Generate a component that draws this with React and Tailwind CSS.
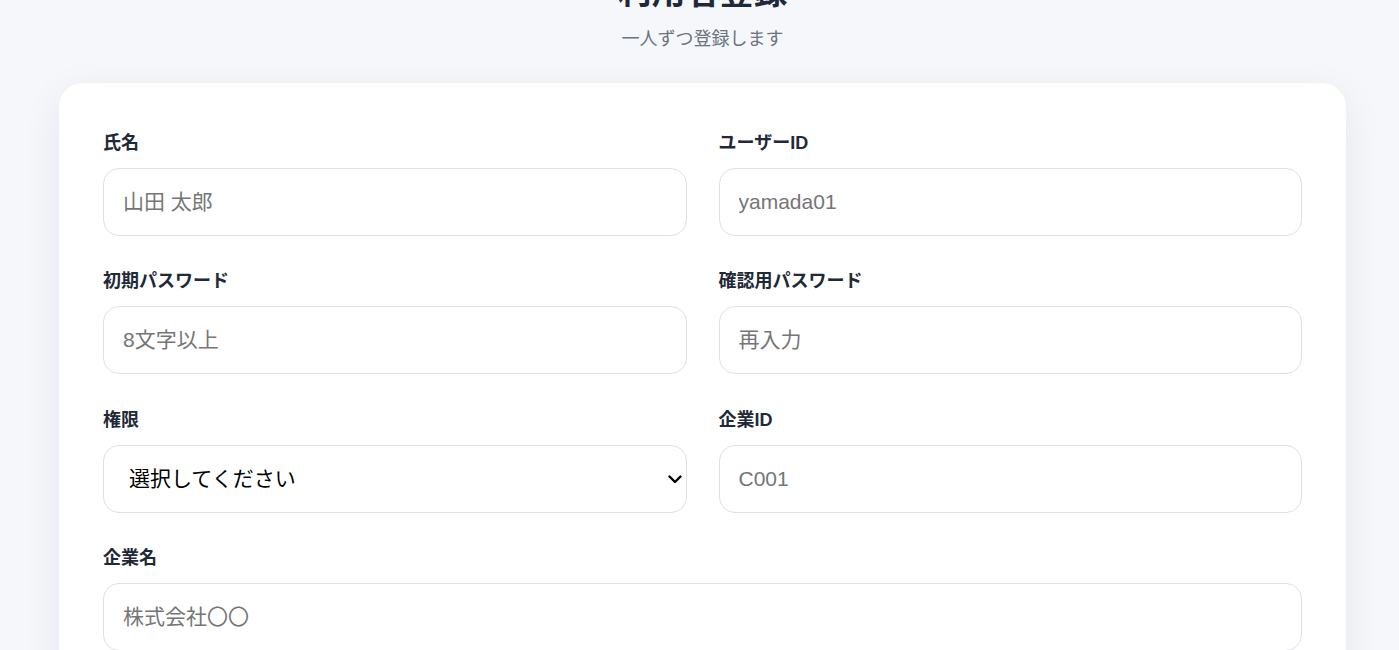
import React, { useState } from "react";

const fields = [
  { id: "name", label: "氏名", placeholder: "山田 太郎" },
  { id: "userId", label: "ユーザーID", placeholder: "yamada01" },
  { id: "password", label: "初期パスワード", placeholder: "8文字以上", type: "password" },
  { id: "confirm", label: "確認用パスワード", placeholder: "再入力", type: "password" },
];

const inputClass =
  "w-full h-[68px] rounded-2xl border border-[#dbe1ea] bg-white px-[19px] text-[21px] text-[#1f2937] outline-none placeholder:text-[#757575] focus:border-[#93a4c0]";

const Field = ({ label, children, wide }) => (
  <div className={wide ? "col-span-2" : ""}>
    <label className="block text-[18px] leading-7 font-bold text-[#1f2937] mb-[11px]">{label}</label>
    {children}
  </div>
);

const App = () => {
  const [form, setForm] = useState({});

  const update = (key) => (e) => setForm({ ...form, [key]: e.target.value });

  return (
    <div
      className="min-h-screen bg-[#f5f7fb] pl-[6px] overflow-hidden"
      style={{ fontFamily: '"Liberation Sans", "Noto Sans CJK JP", sans-serif' }}
    >
      <div className="mx-auto w-[1287px] mt-[-28px]">
        <h1 className="text-center text-[34px] leading-10 font-bold text-[#1f2937]">利用者登録</h1>
        <p className="mt-[13px] text-center text-lg leading-7 text-[#6b7280]">一人ずつ登録します</p>

        <div className="mt-[30px] rounded-3xl bg-white px-[44px] pt-[46px] pb-10 shadow-[0_10px_40px_rgba(15,23,42,0.07)]">
          <div className="grid grid-cols-2 gap-x-8 gap-y-[31.4px]">
            {fields.map((f) => (
              <Field key={f.id} label={f.label}>
                <input
                  type={f.type || "text"}
                  placeholder={f.placeholder}
                  value={form[f.id] || ""}
                  onChange={update(f.id)}
                  className={inputClass}
                />
              </Field>
            ))}

            <Field label="権限">
              <div className="relative">
                <select
                  value={form.role || ""}
                  onChange={update("role")}
                  className="w-full h-[68px] appearance-none rounded-2xl border border-[#dbe1ea] bg-white pl-[25px] pr-10 text-[21px] text-black outline-none"
                >
                  <option value="">選択してください</option>
                  <option value="admin">管理者</option>
                  <option value="user">一般ユーザー</option>
                </select>
                <svg
                  className="pointer-events-none absolute right-[5px] top-[30px]"
                  width="14"
                  height="9"
                  viewBox="0 0 14 9"
                  fill="none"
                >
                  <polyline points="1.5,1.5 7,7 12.5,1.5" stroke="#000" strokeWidth="2.4" strokeLinecap="round" strokeLinejoin="round" />
                </svg>
              </div>
            </Field>

            <Field label="企業ID">
              <input
                placeholder="C001"
                value={form.companyId || ""}
                onChange={update("companyId")}
                className={inputClass}
              />
            </Field>

            <Field label="企業名" wide>
              <input
                placeholder="株式会社〇〇"
                value={form.companyName || ""}
                onChange={update("companyName")}
                className={inputClass}
              />
            </Field>
          </div>
        </div>
      </div>
    </div>
  );
};

export default App;
